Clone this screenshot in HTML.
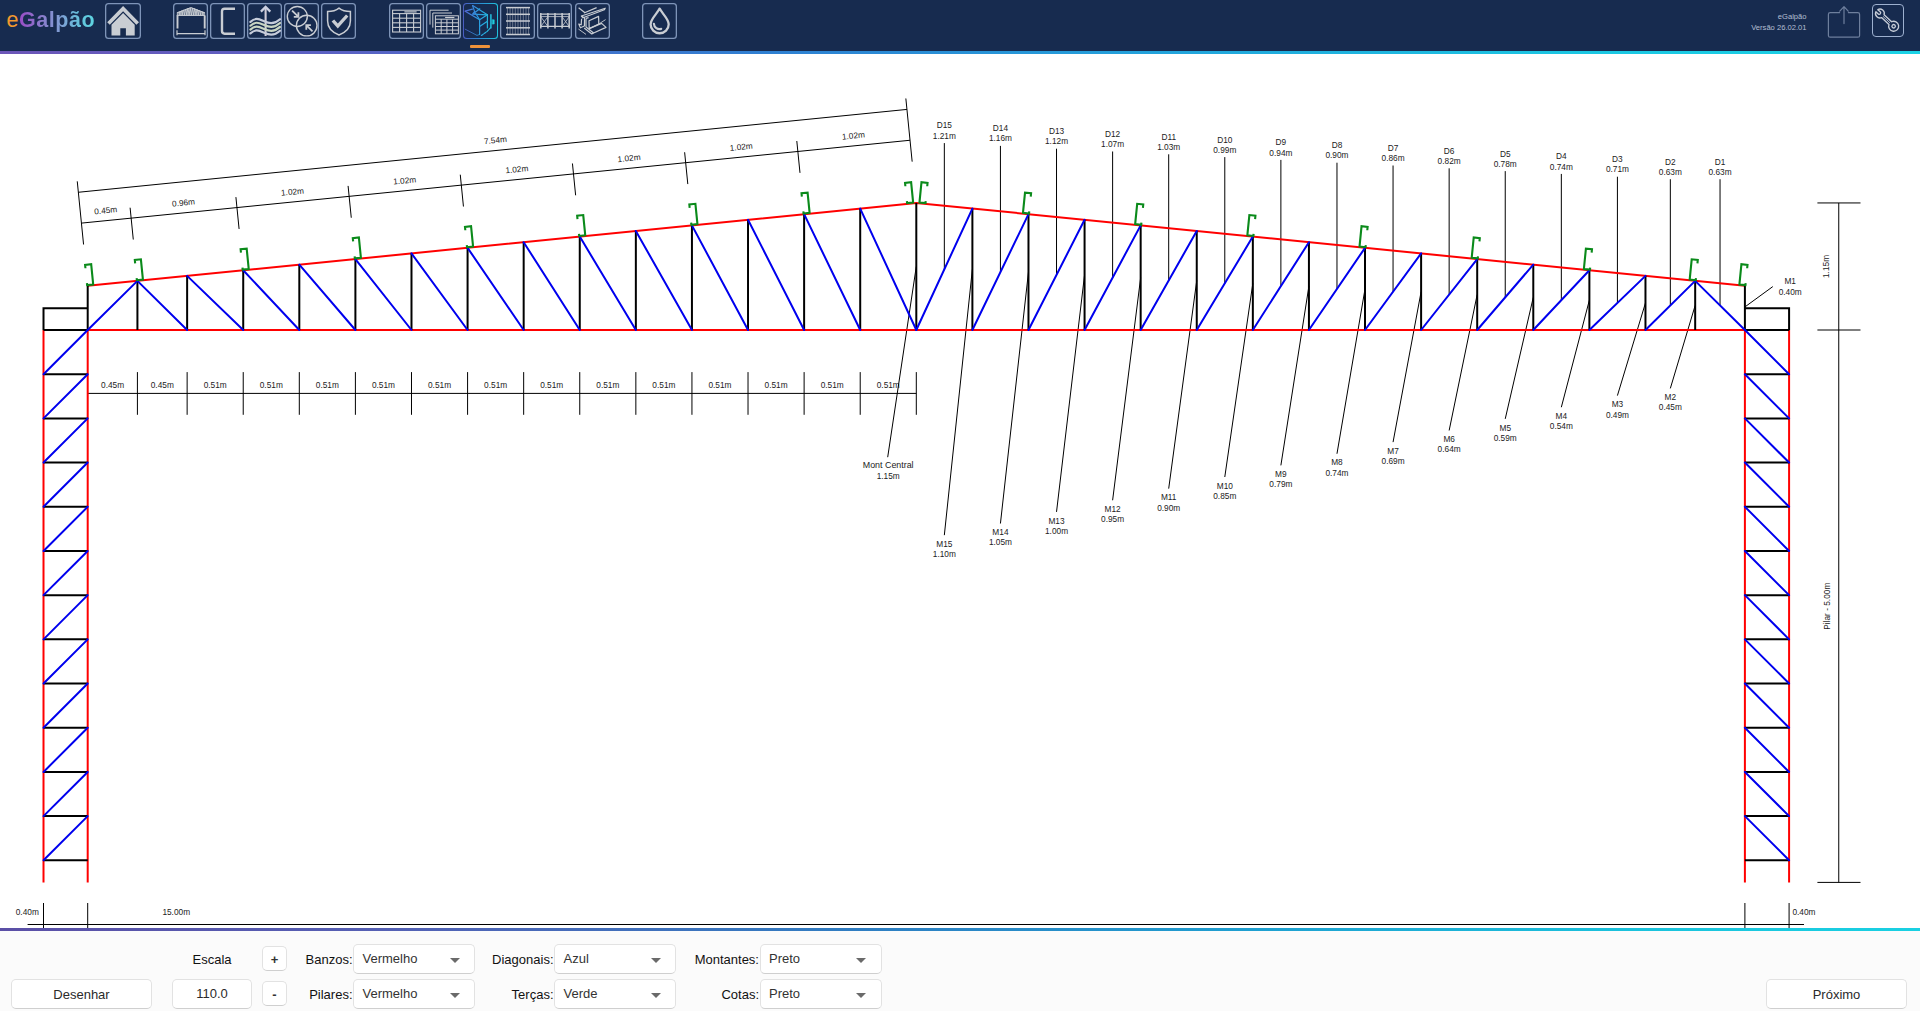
<!DOCTYPE html>
<html lang="pt-BR">
<head>
<meta charset="utf-8">
<title>eGalpão</title>
<style>
html,body{margin:0;padding:0;}
body{width:1920px;height:1011px;overflow:hidden;background:#fff;position:relative;font-family:"Liberation Sans",sans-serif;}
#hdr{position:absolute;left:0;top:0;width:1920px;height:51px;background:#172b4f;z-index:3;}
#hline{position:absolute;left:0;top:50.8px;width:1920px;height:3.6px;z-index:3;background:linear-gradient(90deg,#6c56b8 0%,#5a62c4 18%,#2f80d2 40%,#22a6dc 62%,#1cc6e2 82%,#1bd3e6 100%);}
#logo{position:absolute;left:6.5px;top:8.2px;font-size:21.5px;font-weight:bold;letter-spacing:.55px;line-height:24px;white-space:nowrap;}
#logo .e{color:#f2992e;font-weight:normal;}
#logo .g{background:linear-gradient(90deg,#9a4cc6 0%,#8a7ccc 30%,#7f9fd4 55%,#62c4dc 82%,#5fd6e2 100%);-webkit-background-clip:text;background-clip:text;color:transparent;}
.tb{position:absolute;top:3px;width:35.1px;height:35.9px;box-shadow:inset 0 0 0 1.3px #7e94b8;border-radius:3.5px;}
.tb svg{position:absolute;left:-.4px;top:-.2px;}
.tb.act{box-shadow:none;width:35.2px;height:35.9px;background:linear-gradient(90deg,#4b5cc0,#2b8fd2 50%,#20c0da);}.tb.act:before{content:"";position:absolute;left:1.3px;top:1.3px;right:1.3px;bottom:1.3px;border-radius:3px;background:#172b4f;}
#ind{position:absolute;left:470.3px;top:45px;width:20px;height:2.6px;background:#ef923a;border-radius:1px;}
.ver{position:absolute;right:113.5px;text-align:right;font-size:7.6px;line-height:10px;height:10px;color:#b3bfd2;white-space:nowrap;}
#share{position:absolute;left:1826px;top:4px;}
#tools{position:absolute;left:1872.2px;top:4.4px;width:29.4px;height:30.4px;border:1.4px solid #9db0cf;border-radius:4px;}
#tools svg{position:absolute;left:-1.4px;top:-1.4px;}
#draw{position:absolute;left:0;top:0;z-index:1;}
#draw text{font-family:"Liberation Sans",sans-serif;fill:#222;}
#fline{position:absolute;left:0;top:927.6px;width:1920px;height:3.6px;z-index:3;background:linear-gradient(90deg,#5b4fa6 0%,#5560b4 20%,#2f7ec2 45%,#1f9fd0 65%,#1bc2dc 85%,#19d0e2 100%);}
#ftr{position:absolute;left:0;top:931px;width:1920px;height:80px;background:#fbfbfb;z-index:3;font-size:13px;color:#1a1a1a;}
.fb{position:absolute;box-sizing:border-box;background:#fff;border:1px solid #e2e2e2;border-bottom-color:#cfcfcf;border-radius:5px;text-align:center;color:#2a2a2a;}
.lbl{position:absolute;text-align:right;white-space:nowrap;line-height:16px;color:#111;margin-top:.4px;}
.sel{position:absolute;box-sizing:border-box;width:122px;height:30px;background:#fff;border:1px solid #e2e2e2;border-bottom-color:#cfcfcf;border-radius:5px;line-height:28.6px;padding-left:8.5px;color:#333;}
.sel:after{content:"";position:absolute;right:14.5px;top:12.5px;border-left:5px solid transparent;border-right:5px solid transparent;border-top:5.4px solid #6a6a6a;}
</style>
</head>
<body>
<div id="hdr">
<div id="logo"><span class="e">e</span><span class="g">Galpão</span></div>
<div class="tb " style="left:105.2px;width:36.1px"><svg viewBox="0 0 36 36" width="36" height="36"><path d="M18.1 3 L34 19.2 L31.4 21.8 L18.1 8.2 L4.8 21.8 L2.2 19.2 Z" fill="#c9cdd3"/><path d="M18.1 10 L29.7 21.8 V32.6 H20.9 V25.2 H15.3 V32.6 H6.5 V21.8 Z" fill="#c9cdd3"/></svg></div>
<div class="tb " style="left:173.1px"><svg viewBox="0 0 36 36" width="36" height="36"><defs><clipPath id="rf"><path d="M3.7 12.6 V9.5 L17.9 4.1 L32.1 9.5 V12.6 Z"/></clipPath></defs><path d="M3.7 12.6 V9.5 L17.9 4.1 L32.1 9.5 V12.6 Z" fill="#c9cdd3" fill-opacity=".42"/><g fill="none" stroke="#c9cdd3"><g clip-path="url(#rf)" stroke-width=".9"><path d="M4.6 12.2 L5.8 5 L6.9 12.2" /><path d="M6.9 12.2 L8.0 5 L9.2 12.2" /><path d="M9.2 12.2 L10.3 5 L11.5 12.2" /><path d="M11.5 12.2 L12.7 5 L13.8 12.2" /><path d="M13.8 12.2 L14.9 5 L16.1 12.2" /><path d="M16.1 12.2 L17.2 5 L18.4 12.2" /><path d="M18.4 12.2 L19.5 5 L20.7 12.2" /><path d="M20.7 12.2 L21.8 5 L23.0 12.2" /><path d="M23.0 12.2 L24.1 5 L25.3 12.2" /><path d="M25.3 12.2 L26.4 5 L27.6 12.2" /><path d="M27.6 12.2 L28.8 5 L29.9 12.2" /><path d="M29.9 12.2 L31.0 5 L32.2 12.2" /></g><path d="M3.9 9.9 L17.9 4.6 L31.9 9.9" stroke-width="1"/><path d="M3.7 12.4 H32.1" stroke-width="1.1"/><path d="M4.5 12.4 V25.5 M31.7 12.4 V25.5" stroke-width="1.9"/><path d="M4 27.2 V32.2 M32 27.2 V32.2 M4 30.7 H32" stroke-width="1.2"/></g></svg></div>
<div class="tb " style="left:210.1px"><svg viewBox="0 0 36 36" width="36" height="36"><path d="M25 5.7 H14.6 Q12 5.7 12 8.3 V28.1 Q12 30.7 14.6 30.7 H25" fill="none" stroke="#c9cdd3" stroke-width="2.4"/></svg></div>
<div class="tb " style="left:247.2px"><svg viewBox="0 0 36 36" width="36" height="36"><g fill="none" stroke="#c9cdd3"><path d="M18.6 33 V4.6" stroke-width="2.1" stroke="#d0ccd8"/><path d="M13.9 8.6 L18.6 3.9 L23.3 8.6" stroke-width="2.2" stroke-linejoin="miter" stroke="#ccd0e0"/><g stroke-width="2.2" stroke-linecap="round"><path stroke="#c6ccda" d="M3.4 18.90 C5.4 17.10 7.4 15.95 9.65 15.95 C14.4 15.95 18.9 20.10 24.2 20.10 C27.9 20.10 30.9 18.10 33 16.20" /><path stroke="#c8d4c2" d="M3.4 22.70 C5.4 20.90 7.4 19.75 9.65 19.75 C14.4 19.75 18.9 23.90 24.2 23.90 C27.9 23.90 30.9 21.90 33 20.00" /><path stroke="#c8d4c2" d="M3.4 26.60 C5.4 24.80 7.4 23.65 9.65 23.65 C14.4 23.65 18.9 27.80 24.2 27.80 C27.9 27.80 30.9 25.80 33 23.90" /><path stroke="#c6ccda" d="M3.4 30.40 C5.4 28.60 7.4 27.45 9.65 27.45 C14.4 27.45 18.9 31.60 24.2 31.60 C27.9 31.60 30.9 29.60 33 27.70" /></g></g></svg></div>
<div class="tb " style="left:284.3px"><svg viewBox="0 0 36 36" width="36" height="36"><g fill="none" stroke="#c9cdd3" stroke-width="1.4"><circle cx="13.3" cy="13.45" r="10"/><circle cx="22.7" cy="22.6" r="10.3"/><path d="M8.1 7.6 L14.2 13.7 M14.4 9.3 V13.9 H9.8" stroke-width="1.8"/><path d="M28.5 28.45 L22.5 22.4 M22.3 26.8 V22.2 H26.9" stroke-width="1.8"/></g></svg></div>
<div class="tb " style="left:321.3px"><svg viewBox="0 0 36 36" width="36" height="36"><path d="M18 5.2 C21 7.6 25 8.6 29.4 8.6 V18 C29.4 25 24.6 29.4 18 32 C11.4 29.4 6.6 25 6.6 18 V8.6 C11 8.6 15 7.6 18 5.2 Z" fill="none" stroke="#c9cdd3" stroke-width="1.5"/><path d="M10.6 18.6 L13.2 16.4 L16.8 20.6 L25 11.4 L27.4 13.4 L16.8 25.4 Z" fill="#c9cdd3"/></svg></div>
<div class="tb " style="left:389.2px"><svg viewBox="0 0 36 36" width="36" height="36"><g fill="none" stroke="#c9cdd3" stroke-width="1.1"><rect x="3.6" y="7.2" width="28" height="21.8" /><path d="M3.6 10.6 H31.6" /><path d="M3.6 15.2 H31.6" /><path d="M3.6 19.8 H31.6" /><path d="M3.6 24.4 H31.6" /><path d="M10.6 10.6 V29.0" /><path d="M17.6 10.6 V29.0" /><path d="M24.6 10.6 V29.0" /><path d="M15.4 8.9 H27.6" stroke-width="1.2"/></g></svg></div>
<div class="tb " style="left:426.2px"><svg viewBox="0 0 36 36" width="36" height="36"><g fill="none" stroke="#c9cdd3" stroke-width="1"><path d="M4 21.6 V7.2 H22.6"/><path d="M6.8 24.6 V10 H26"/><rect x="9.4" y="12.8" width="23" height="18" /><path d="M9.4 16.2 H32.4" /><path d="M9.4 19.8 H32.4" /><path d="M9.4 23.5 H32.4" /><path d="M9.4 27.1 H32.4" /><path d="M15.2 16.2 V30.8" /><path d="M20.9 16.2 V30.8" /><path d="M26.6 16.2 V30.8" /><path d="M19.1 14.5 H28.4" stroke-width="1.2"/></g></svg></div>
<div class="tb act" style="left:463.2px"><svg viewBox="0 0 36 36" width="36" height="36"><defs><linearGradient id="gbx" gradientUnits="userSpaceOnUse" x1="0" y1="0" x2="34" y2="0"><stop offset="0" stop-color="#5a62d8"/><stop offset="0.45" stop-color="#2a9be0"/><stop offset="1" stop-color="#1fd0dc"/></linearGradient></defs><g fill="none" stroke="url(#gbx)" stroke-width="1.2" stroke-linejoin="round" stroke-linecap="round"><path d="M2.2 8.2 L16.6 16.8 V31.4"/><path d="M2.2 8.2 L9.4 6.2 M9.6 2.6 L24.4 11.8 L16.6 16.8"/><path d="M9.6 2.6 L11.6 8.6 L16.6 16.8 M9.6 11.2 L16.8 5.8 M9.6 11.2 L24.4 11.8 M11.6 8.6 L9.6 11.2"/><path d="M24.4 11.8 V25 M17 23.2 L24.4 18.2"/><path d="M2.2 26.2 L14 32.4 L16.6 31.4" stroke-width="1" opacity=".75"/><path d="M18.4 32.4 L24.4 28.2 L27.6 24.6" stroke-dasharray="2.2 1.2"/><path d="M27.9 11.8 V25" stroke-width="1.5"/><path d="M29.4 16.8 H31.2 V21 H29.4 Z" fill="#1fd0dc" stroke-width=".6"/></g></svg></div>
<div class="tb " style="left:500.3px"><svg viewBox="0 0 36 36" width="36" height="36"><g fill="none" stroke="#c9cdd3"><path d="M6 4.6 H30" stroke-width="1.5"/><path d="M6 11.3 H30" stroke-width="1.5"/><path d="M6 18 H30" stroke-width="1.5"/><path d="M6 24.8 H30" stroke-width="1.5"/><path d="M6 31.5 H30" stroke-width="1.5"/><path d="M7.4 4.6 V31.5" stroke-width="0.6" opacity=".8"/><path d="M10.1 4.6 V31.5" stroke-width="0.6" opacity=".8"/><path d="M12.7 4.6 V31.5" stroke-width="0.6" opacity=".8"/><path d="M15.3 4.6 V31.5" stroke-width="0.6" opacity=".8"/><path d="M18.0 4.6 V31.5" stroke-width="0.6" opacity=".8"/><path d="M20.6 4.6 V31.5" stroke-width="0.6" opacity=".8"/><path d="M23.3 4.6 V31.5" stroke-width="0.6" opacity=".8"/><path d="M26.0 4.6 V31.5" stroke-width="0.6" opacity=".8"/><path d="M28.6 4.6 V31.5" stroke-width="0.6" opacity=".8"/></g></svg></div>
<div class="tb " style="left:537.4px"><svg viewBox="0 0 36 36" width="36" height="36"><g fill="none" stroke="#c9cdd3"><path d="M3.4 11.2 H32.8 M3.4 23.4 H32.8" stroke-width="1.3"/><path d="M3.8 10 V25.4" stroke-width="1.5"/><path d="M10.9 10 V25.4" stroke-width="1.5"/><path d="M18 10 V25.4" stroke-width="1.5"/><path d="M25.1 10 V25.4" stroke-width="1.5"/><path d="M32.2 10 V25.4" stroke-width="1.5"/><path d="M3.8 13.8 L10.9 23.4 M10.9 13.8 L3.8 23.4 M25.1 13.8 L32.2 23.4 M32.2 13.8 L25.1 23.4" stroke-width=".8"/><path d="M3.4 13.6 H32.8" stroke-width=".8"/></g></svg></div>
<div class="tb " style="left:574.5px"><svg viewBox="0 0 36 36" width="36" height="36"><g transform="translate(0 -2.6)" fill="none" stroke="#c9cdd3" stroke-width="1.2" stroke-linejoin="round"><path d="M4.6 7.4 L11 12.4 M10 12.6 L22.6 7.2 M7.4 15.6 L31.2 7.8 L30.4 9.4 L9 17.4 Z"/><path d="M7.4 15.6 L10.6 17.6 L10.4 25.6 L6.4 27.4 L4.8 23.6 L7.2 24.4 L7.6 18.4"/><path d="M12 18 V26.6 L19.6 32.6 M12 18 L14.6 17.2"/><path d="M15 20.4 L24.6 16 L24.8 23.6 L15.2 28.2 Z"/><path d="M15.2 28.2 L27.6 23 L32 27 L19.6 32.6 L17.8 33.6 L10.2 27.6"/><path d="M24.8 23.6 L31.6 19.2 M4.4 28.6 L12 34" stroke-width=".9"/></g></svg></div>
<div class="tb " style="left:641.9px"><svg viewBox="0 0 36 36" width="36" height="36"><g fill="none" stroke="#c9cdd3"><path d="M17.65 5.6 C15 10.8 8.6 16 8.6 21.2 A9.05 9.05 0 0 0 26.7 21.2 C26.7 16 20.3 10.8 17.65 5.6 Z" stroke-width="2.3" stroke-linejoin="round"/><path d="M11.9 20.8 A5.6 5.6 0 0 0 19.2 25.9" stroke-width="2.2" stroke-linecap="round"/></g></svg></div>
<div id="ind"></div>
<div class="ver" style="top:11.6px">eGalpão</div><div class="ver" style="top:22.5px">Versão 26.02.01</div>
<div id="share"><svg width="36" height="36" viewBox="0 0 36 36"><g fill="none" stroke="#6e7f9d" stroke-width="1.2" stroke-linecap="round" stroke-linejoin="round"><path d="M13.6 8.6 H4.2 Q2.4 8.6 2.4 10.4 V31.4 Q2.4 33.2 4.2 33.2 H31.8 Q33.6 33.2 33.6 31.4 V10.4 Q33.6 8.6 31.8 8.6 H22.4"/><path d="M18 19.6 V3 M13.8 7.2 L18 2.6 L22.2 7.2"/></g></svg></div>
<div id="tools"><svg width="34" height="34" viewBox="0 0 34 34"><g transform="translate(7.9 9.5) rotate(42.8)" fill="none" stroke="#c6ccd7" stroke-width="1.35" stroke-linejoin="round" stroke-linecap="round"><path d="M-4.17 -1.4 L-0.9 -1.4 A1.4 1.4 0 0 1 -0.9 1.4 L-4.17 1.4 A4.4 4.4 0 0 0 3.97 1.9 L14.13 1.9 A5 5 0 1 0 14.13 -1.9 L3.97 -1.9 A4.4 4.4 0 0 0 -4.17 -1.4 Z"/><circle cx="18.75" cy="0" r="1.7"/><path d="M4.6 0 H13.35" stroke-width=".8"/></g></svg></div>
</div>
<div id="hline"></div>
<svg id="draw" width="1920" height="1011" viewBox="0 0 1920 1011">
<line x1="87.7" y1="393.4" x2="916.3" y2="393.4" stroke="#000" stroke-width="1.0"/>
<line x1="137.42" y1="372.1" x2="137.42" y2="414.8" stroke="#000" stroke-width="1.0"/>
<text x="112.56" y="387.9" font-size="8.3" text-anchor="middle">0.45m</text>
<line x1="187.13" y1="372.1" x2="187.13" y2="414.8" stroke="#000" stroke-width="1.0"/>
<text x="162.27" y="387.9" font-size="8.3" text-anchor="middle">0.45m</text>
<line x1="243.22" y1="372.1" x2="243.22" y2="414.8" stroke="#000" stroke-width="1.0"/>
<text x="215.18" y="387.9" font-size="8.3" text-anchor="middle">0.51m</text>
<line x1="299.31" y1="372.1" x2="299.31" y2="414.8" stroke="#000" stroke-width="1.0"/>
<text x="271.27" y="387.9" font-size="8.3" text-anchor="middle">0.51m</text>
<line x1="355.4" y1="372.1" x2="355.4" y2="414.8" stroke="#000" stroke-width="1.0"/>
<text x="327.36" y="387.9" font-size="8.3" text-anchor="middle">0.51m</text>
<line x1="411.49" y1="372.1" x2="411.49" y2="414.8" stroke="#000" stroke-width="1.0"/>
<text x="383.45" y="387.9" font-size="8.3" text-anchor="middle">0.51m</text>
<line x1="467.58" y1="372.1" x2="467.58" y2="414.8" stroke="#000" stroke-width="1.0"/>
<text x="439.54" y="387.9" font-size="8.3" text-anchor="middle">0.51m</text>
<line x1="523.67" y1="372.1" x2="523.67" y2="414.8" stroke="#000" stroke-width="1.0"/>
<text x="495.63" y="387.9" font-size="8.3" text-anchor="middle">0.51m</text>
<line x1="579.76" y1="372.1" x2="579.76" y2="414.8" stroke="#000" stroke-width="1.0"/>
<text x="551.72" y="387.9" font-size="8.3" text-anchor="middle">0.51m</text>
<line x1="635.85" y1="372.1" x2="635.85" y2="414.8" stroke="#000" stroke-width="1.0"/>
<text x="607.81" y="387.9" font-size="8.3" text-anchor="middle">0.51m</text>
<line x1="691.94" y1="372.1" x2="691.94" y2="414.8" stroke="#000" stroke-width="1.0"/>
<text x="663.9" y="387.9" font-size="8.3" text-anchor="middle">0.51m</text>
<line x1="748.03" y1="372.1" x2="748.03" y2="414.8" stroke="#000" stroke-width="1.0"/>
<text x="719.99" y="387.9" font-size="8.3" text-anchor="middle">0.51m</text>
<line x1="804.12" y1="372.1" x2="804.12" y2="414.8" stroke="#000" stroke-width="1.0"/>
<text x="776.08" y="387.9" font-size="8.3" text-anchor="middle">0.51m</text>
<line x1="860.21" y1="372.1" x2="860.21" y2="414.8" stroke="#000" stroke-width="1.0"/>
<text x="832.17" y="387.9" font-size="8.3" text-anchor="middle">0.51m</text>
<line x1="916.3" y1="372.1" x2="916.3" y2="414.8" stroke="#000" stroke-width="1.0"/>
<text x="888.26" y="387.9" font-size="8.3" text-anchor="middle">0.51m</text>
<line x1="81.43" y1="223.12" x2="910.03" y2="140.26" stroke="#000" stroke-width="1.0"/>
<line x1="78.35" y1="192.27" x2="906.95" y2="109.41" stroke="#000" stroke-width="1.0"/>
<line x1="83.57" y1="244.51" x2="77.25" y2="181.33" stroke="#000" stroke-width="1.0"/>
<line x1="133.29" y1="239.54" x2="130.1" y2="207.7" stroke="#000" stroke-width="1.0"/>
<text x="106" y="213.33" font-size="8.3" text-anchor="middle" transform="rotate(-5.71 106 213.33)">0.45m</text>
<line x1="239.09" y1="228.96" x2="235.91" y2="197.12" stroke="#000" stroke-width="1.0"/>
<text x="183.77" y="205.55" font-size="8.3" text-anchor="middle" transform="rotate(-5.71 183.77 205.55)">0.96m</text>
<line x1="351.27" y1="217.74" x2="348.09" y2="185.9" stroke="#000" stroke-width="1.0"/>
<text x="292.76" y="194.65" font-size="8.3" text-anchor="middle" transform="rotate(-5.71 292.76 194.65)">1.02m</text>
<line x1="463.45" y1="206.53" x2="460.27" y2="174.68" stroke="#000" stroke-width="1.0"/>
<text x="404.94" y="183.43" font-size="8.3" text-anchor="middle" transform="rotate(-5.71 404.94 183.43)">1.02m</text>
<line x1="575.63" y1="195.31" x2="572.45" y2="163.47" stroke="#000" stroke-width="1.0"/>
<text x="517.12" y="172.22" font-size="8.3" text-anchor="middle" transform="rotate(-5.71 517.12 172.22)">1.02m</text>
<line x1="687.81" y1="184.09" x2="684.63" y2="152.25" stroke="#000" stroke-width="1.0"/>
<text x="629.3" y="161" font-size="8.3" text-anchor="middle" transform="rotate(-5.71 629.3 161)">1.02m</text>
<line x1="799.99" y1="172.87" x2="796.81" y2="141.03" stroke="#000" stroke-width="1.0"/>
<text x="741.48" y="149.78" font-size="8.3" text-anchor="middle" transform="rotate(-5.71 741.48 149.78)">1.02m</text>
<line x1="912.17" y1="161.65" x2="905.85" y2="98.47" stroke="#000" stroke-width="1.0"/>
<text x="853.66" y="138.56" font-size="8.3" text-anchor="middle" transform="rotate(-5.71 853.66 138.56)">1.02m</text>
<text x="495.66" y="143.01" font-size="8.3" text-anchor="middle" transform="rotate(-5.71 495.66 143.01)">7.54m</text>
<line x1="1838.75" y1="202.95" x2="1838.75" y2="882.4" stroke="#000" stroke-width="1.0"/>
<line x1="1817.4" y1="202.95" x2="1860.5" y2="202.95" stroke="#000" stroke-width="1.0"/>
<line x1="1817.4" y1="330" x2="1860.5" y2="330" stroke="#000" stroke-width="1.0"/>
<line x1="1817.4" y1="882.4" x2="1860.5" y2="882.4" stroke="#000" stroke-width="1.0"/>
<text x="1829.3" y="266.47" font-size="8.3" text-anchor="middle" transform="rotate(-90 1829.3 266.47)">1.15m</text>
<text x="1829.7" y="606.2" font-size="8.3" text-anchor="middle" transform="rotate(-90 1829.7 606.2)">Pilar - 5.00m</text>
<line x1="27.6" y1="924.5" x2="1804" y2="924.5" stroke="#000" stroke-width="1.0"/>
<line x1="43.51" y1="903" x2="43.51" y2="929" stroke="#000" stroke-width="1.0"/>
<line x1="87.7" y1="903" x2="87.7" y2="929" stroke="#000" stroke-width="1.0"/>
<line x1="1744.9" y1="903" x2="1744.9" y2="929" stroke="#000" stroke-width="1.0"/>
<line x1="1789.09" y1="903" x2="1789.09" y2="929" stroke="#000" stroke-width="1.0"/>
<text x="38.8" y="914.7" font-size="8.3" text-anchor="end">0.40m</text>
<text x="162.4" y="914.7" font-size="8.3" text-anchor="start">15.00m</text>
<text x="1792.4" y="914.7" font-size="8.3" text-anchor="start">0.40m</text>
<line x1="1720.04" y1="179.22" x2="1720.04" y2="305.42" stroke="#000" stroke-width="1.0"/>
<text x="1720.04" y="164.62" font-size="8.3" text-anchor="middle">D1</text>
<text x="1720.04" y="174.82" font-size="8.3" text-anchor="middle">0.63m</text>
<line x1="1670.33" y1="179.22" x2="1670.33" y2="305.42" stroke="#000" stroke-width="1.0"/>
<text x="1670.33" y="164.62" font-size="8.3" text-anchor="middle">D2</text>
<text x="1670.33" y="174.82" font-size="8.3" text-anchor="middle">0.63m</text>
<line x1="1617.42" y1="176.73" x2="1617.42" y2="302.93" stroke="#000" stroke-width="1.0"/>
<text x="1617.42" y="162.13" font-size="8.3" text-anchor="middle">D3</text>
<text x="1617.42" y="172.33" font-size="8.3" text-anchor="middle">0.71m</text>
<line x1="1561.33" y1="173.93" x2="1561.33" y2="300.13" stroke="#000" stroke-width="1.0"/>
<text x="1561.33" y="159.33" font-size="8.3" text-anchor="middle">D4</text>
<text x="1561.33" y="169.53" font-size="8.3" text-anchor="middle">0.74m</text>
<line x1="1505.24" y1="171.12" x2="1505.24" y2="297.32" stroke="#000" stroke-width="1.0"/>
<text x="1505.24" y="156.52" font-size="8.3" text-anchor="middle">D5</text>
<text x="1505.24" y="166.72" font-size="8.3" text-anchor="middle">0.78m</text>
<line x1="1449.15" y1="168.32" x2="1449.15" y2="294.52" stroke="#000" stroke-width="1.0"/>
<text x="1449.15" y="153.72" font-size="8.3" text-anchor="middle">D6</text>
<text x="1449.15" y="163.92" font-size="8.3" text-anchor="middle">0.82m</text>
<line x1="1393.06" y1="165.51" x2="1393.06" y2="291.71" stroke="#000" stroke-width="1.0"/>
<text x="1393.06" y="150.91" font-size="8.3" text-anchor="middle">D7</text>
<text x="1393.06" y="161.11" font-size="8.3" text-anchor="middle">0.86m</text>
<line x1="1336.97" y1="162.71" x2="1336.97" y2="288.91" stroke="#000" stroke-width="1.0"/>
<text x="1336.97" y="148.11" font-size="8.3" text-anchor="middle">D8</text>
<text x="1336.97" y="158.31" font-size="8.3" text-anchor="middle">0.90m</text>
<line x1="1280.88" y1="159.91" x2="1280.88" y2="286.11" stroke="#000" stroke-width="1.0"/>
<text x="1280.88" y="145.31" font-size="8.3" text-anchor="middle">D9</text>
<text x="1280.88" y="155.51" font-size="8.3" text-anchor="middle">0.94m</text>
<line x1="1224.79" y1="157.1" x2="1224.79" y2="283.3" stroke="#000" stroke-width="1.0"/>
<text x="1224.79" y="142.5" font-size="8.3" text-anchor="middle">D10</text>
<text x="1224.79" y="152.7" font-size="8.3" text-anchor="middle">0.99m</text>
<line x1="1168.7" y1="154.3" x2="1168.7" y2="280.5" stroke="#000" stroke-width="1.0"/>
<text x="1168.7" y="139.7" font-size="8.3" text-anchor="middle">D11</text>
<text x="1168.7" y="149.9" font-size="8.3" text-anchor="middle">1.03m</text>
<line x1="1112.61" y1="151.49" x2="1112.61" y2="277.69" stroke="#000" stroke-width="1.0"/>
<text x="1112.61" y="136.89" font-size="8.3" text-anchor="middle">D12</text>
<text x="1112.61" y="147.09" font-size="8.3" text-anchor="middle">1.07m</text>
<line x1="1056.52" y1="148.69" x2="1056.52" y2="274.89" stroke="#000" stroke-width="1.0"/>
<text x="1056.52" y="134.09" font-size="8.3" text-anchor="middle">D13</text>
<text x="1056.52" y="144.29" font-size="8.3" text-anchor="middle">1.12m</text>
<line x1="1000.43" y1="145.88" x2="1000.43" y2="272.08" stroke="#000" stroke-width="1.0"/>
<text x="1000.43" y="131.28" font-size="8.3" text-anchor="middle">D14</text>
<text x="1000.43" y="141.48" font-size="8.3" text-anchor="middle">1.16m</text>
<line x1="944.34" y1="143.08" x2="944.34" y2="269.28" stroke="#000" stroke-width="1.0"/>
<text x="944.34" y="128.48" font-size="8.3" text-anchor="middle">D15</text>
<text x="944.34" y="138.68" font-size="8.3" text-anchor="middle">1.21m</text>
<line x1="1745.1" y1="306.8" x2="1772.8" y2="286.6" stroke="#000" stroke-width="1.0"/>
<text x="1790.2" y="284.3" font-size="8.3" text-anchor="middle">M1</text>
<text x="1790.2" y="294.5" font-size="8.3" text-anchor="middle">0.40m</text>
<line x1="1695.18" y1="305.42" x2="1670.33" y2="388.4" stroke="#000" stroke-width="1.0"/>
<text x="1670.33" y="400.1" font-size="8.3" text-anchor="middle">M2</text>
<text x="1670.33" y="410.3" font-size="8.3" text-anchor="middle">0.45m</text>
<line x1="1645.47" y1="302.93" x2="1617.42" y2="395.6" stroke="#000" stroke-width="1.0"/>
<text x="1617.42" y="407.3" font-size="8.3" text-anchor="middle">M3</text>
<text x="1617.42" y="417.5" font-size="8.3" text-anchor="middle">0.49m</text>
<line x1="1589.38" y1="300.13" x2="1561.33" y2="407.23" stroke="#000" stroke-width="1.0"/>
<text x="1561.33" y="418.93" font-size="8.3" text-anchor="middle">M4</text>
<text x="1561.33" y="429.13" font-size="8.3" text-anchor="middle">0.54m</text>
<line x1="1533.29" y1="297.32" x2="1505.24" y2="418.86" stroke="#000" stroke-width="1.0"/>
<text x="1505.24" y="430.56" font-size="8.3" text-anchor="middle">M5</text>
<text x="1505.24" y="440.76" font-size="8.3" text-anchor="middle">0.59m</text>
<line x1="1477.2" y1="294.52" x2="1449.15" y2="430.49" stroke="#000" stroke-width="1.0"/>
<text x="1449.15" y="442.19" font-size="8.3" text-anchor="middle">M6</text>
<text x="1449.15" y="452.39" font-size="8.3" text-anchor="middle">0.64m</text>
<line x1="1421.11" y1="291.71" x2="1393.06" y2="442.12" stroke="#000" stroke-width="1.0"/>
<text x="1393.06" y="453.82" font-size="8.3" text-anchor="middle">M7</text>
<text x="1393.06" y="464.02" font-size="8.3" text-anchor="middle">0.69m</text>
<line x1="1365.02" y1="288.91" x2="1336.97" y2="453.75" stroke="#000" stroke-width="1.0"/>
<text x="1336.97" y="465.45" font-size="8.3" text-anchor="middle">M8</text>
<text x="1336.97" y="475.65" font-size="8.3" text-anchor="middle">0.74m</text>
<line x1="1308.93" y1="286.11" x2="1280.88" y2="465.38" stroke="#000" stroke-width="1.0"/>
<text x="1280.88" y="477.08" font-size="8.3" text-anchor="middle">M9</text>
<text x="1280.88" y="487.28" font-size="8.3" text-anchor="middle">0.79m</text>
<line x1="1252.84" y1="283.3" x2="1224.79" y2="477.01" stroke="#000" stroke-width="1.0"/>
<text x="1224.79" y="488.71" font-size="8.3" text-anchor="middle">M10</text>
<text x="1224.79" y="498.91" font-size="8.3" text-anchor="middle">0.85m</text>
<line x1="1196.75" y1="280.5" x2="1168.7" y2="488.64" stroke="#000" stroke-width="1.0"/>
<text x="1168.7" y="500.34" font-size="8.3" text-anchor="middle">M11</text>
<text x="1168.7" y="510.54" font-size="8.3" text-anchor="middle">0.90m</text>
<line x1="1140.66" y1="277.69" x2="1112.61" y2="500.27" stroke="#000" stroke-width="1.0"/>
<text x="1112.61" y="511.97" font-size="8.3" text-anchor="middle">M12</text>
<text x="1112.61" y="522.17" font-size="8.3" text-anchor="middle">0.95m</text>
<line x1="1084.57" y1="274.89" x2="1056.52" y2="511.9" stroke="#000" stroke-width="1.0"/>
<text x="1056.52" y="523.6" font-size="8.3" text-anchor="middle">M13</text>
<text x="1056.52" y="533.8" font-size="8.3" text-anchor="middle">1.00m</text>
<line x1="1028.48" y1="272.08" x2="1000.43" y2="523.53" stroke="#000" stroke-width="1.0"/>
<text x="1000.43" y="535.23" font-size="8.3" text-anchor="middle">M14</text>
<text x="1000.43" y="545.43" font-size="8.3" text-anchor="middle">1.05m</text>
<line x1="972.39" y1="269.28" x2="944.34" y2="535.16" stroke="#000" stroke-width="1.0"/>
<text x="944.34" y="546.86" font-size="8.3" text-anchor="middle">M15</text>
<text x="944.34" y="557.06" font-size="8.3" text-anchor="middle">1.10m</text>
<line x1="916.3" y1="266.47" x2="887.7" y2="457.2" stroke="#000" stroke-width="1.0"/>
<text x="888.2" y="468.4" font-size="8.9" text-anchor="middle">Mont Central</text>
<text x="888.2" y="478.7" font-size="8.3" text-anchor="middle">1.15m</text>
<line x1="43.51" y1="330" x2="43.51" y2="882.4" stroke="#ff0000" stroke-width="2.0"/>
<line x1="87.7" y1="330" x2="87.7" y2="882.4" stroke="#ff0000" stroke-width="2.0"/>
<line x1="1744.9" y1="330" x2="1744.9" y2="882.4" stroke="#ff0000" stroke-width="2.0"/>
<line x1="1789.09" y1="330" x2="1789.09" y2="882.4" stroke="#ff0000" stroke-width="2.0"/>
<line x1="87.7" y1="330" x2="1744.9" y2="330" stroke="#ff0000" stroke-width="2.0"/>
<polyline points="87.7,285.81 916.3,202.95 1744.9,285.81" fill="none" stroke="#ff0000" stroke-width="2.0" stroke-linejoin="round"/>
<line x1="87.7" y1="330" x2="87.7" y2="285.81" stroke="#000" stroke-width="2.0"/>
<line x1="137.42" y1="330" x2="137.42" y2="280.84" stroke="#000" stroke-width="2.0"/>
<line x1="187.13" y1="330" x2="187.13" y2="275.86" stroke="#000" stroke-width="2.0"/>
<line x1="243.22" y1="330" x2="243.22" y2="270.26" stroke="#000" stroke-width="2.0"/>
<line x1="299.31" y1="330" x2="299.31" y2="264.65" stroke="#000" stroke-width="2.0"/>
<line x1="355.4" y1="330" x2="355.4" y2="259.04" stroke="#000" stroke-width="2.0"/>
<line x1="411.49" y1="330" x2="411.49" y2="253.43" stroke="#000" stroke-width="2.0"/>
<line x1="467.58" y1="330" x2="467.58" y2="247.82" stroke="#000" stroke-width="2.0"/>
<line x1="523.67" y1="330" x2="523.67" y2="242.21" stroke="#000" stroke-width="2.0"/>
<line x1="579.76" y1="330" x2="579.76" y2="236.6" stroke="#000" stroke-width="2.0"/>
<line x1="635.85" y1="330" x2="635.85" y2="230.99" stroke="#000" stroke-width="2.0"/>
<line x1="691.94" y1="330" x2="691.94" y2="225.38" stroke="#000" stroke-width="2.0"/>
<line x1="748.03" y1="330" x2="748.03" y2="219.77" stroke="#000" stroke-width="2.0"/>
<line x1="804.12" y1="330" x2="804.12" y2="214.17" stroke="#000" stroke-width="2.0"/>
<line x1="860.21" y1="330" x2="860.21" y2="208.56" stroke="#000" stroke-width="2.0"/>
<line x1="1744.9" y1="330" x2="1744.9" y2="285.81" stroke="#000" stroke-width="2.0"/>
<line x1="1695.18" y1="330" x2="1695.18" y2="280.84" stroke="#000" stroke-width="2.0"/>
<line x1="1645.47" y1="330" x2="1645.47" y2="275.86" stroke="#000" stroke-width="2.0"/>
<line x1="1589.38" y1="330" x2="1589.38" y2="270.26" stroke="#000" stroke-width="2.0"/>
<line x1="1533.29" y1="330" x2="1533.29" y2="264.65" stroke="#000" stroke-width="2.0"/>
<line x1="1477.2" y1="330" x2="1477.2" y2="259.04" stroke="#000" stroke-width="2.0"/>
<line x1="1421.11" y1="330" x2="1421.11" y2="253.43" stroke="#000" stroke-width="2.0"/>
<line x1="1365.02" y1="330" x2="1365.02" y2="247.82" stroke="#000" stroke-width="2.0"/>
<line x1="1308.93" y1="330" x2="1308.93" y2="242.21" stroke="#000" stroke-width="2.0"/>
<line x1="1252.84" y1="330" x2="1252.84" y2="236.6" stroke="#000" stroke-width="2.0"/>
<line x1="1196.75" y1="330" x2="1196.75" y2="230.99" stroke="#000" stroke-width="2.0"/>
<line x1="1140.66" y1="330" x2="1140.66" y2="225.38" stroke="#000" stroke-width="2.0"/>
<line x1="1084.57" y1="330" x2="1084.57" y2="219.77" stroke="#000" stroke-width="2.0"/>
<line x1="1028.48" y1="330" x2="1028.48" y2="214.17" stroke="#000" stroke-width="2.0"/>
<line x1="972.39" y1="330" x2="972.39" y2="208.56" stroke="#000" stroke-width="2.0"/>
<line x1="916.3" y1="330" x2="916.3" y2="202.95" stroke="#000" stroke-width="2.0"/>
<line x1="87.7" y1="330" x2="43.51" y2="330" stroke="#000" stroke-width="2.0"/>
<line x1="87.7" y1="374.19" x2="43.51" y2="374.19" stroke="#000" stroke-width="2.0"/>
<line x1="87.7" y1="418.38" x2="43.51" y2="418.38" stroke="#000" stroke-width="2.0"/>
<line x1="87.7" y1="462.58" x2="43.51" y2="462.58" stroke="#000" stroke-width="2.0"/>
<line x1="87.7" y1="506.77" x2="43.51" y2="506.77" stroke="#000" stroke-width="2.0"/>
<line x1="87.7" y1="550.96" x2="43.51" y2="550.96" stroke="#000" stroke-width="2.0"/>
<line x1="87.7" y1="595.15" x2="43.51" y2="595.15" stroke="#000" stroke-width="2.0"/>
<line x1="87.7" y1="639.34" x2="43.51" y2="639.34" stroke="#000" stroke-width="2.0"/>
<line x1="87.7" y1="683.54" x2="43.51" y2="683.54" stroke="#000" stroke-width="2.0"/>
<line x1="87.7" y1="727.73" x2="43.51" y2="727.73" stroke="#000" stroke-width="2.0"/>
<line x1="87.7" y1="771.92" x2="43.51" y2="771.92" stroke="#000" stroke-width="2.0"/>
<line x1="87.7" y1="816.11" x2="43.51" y2="816.11" stroke="#000" stroke-width="2.0"/>
<line x1="87.7" y1="860.3" x2="43.51" y2="860.3" stroke="#000" stroke-width="2.0"/>
<polyline points="87.7,308.2 43.51,308.2 43.51,330" fill="none" stroke="#000" stroke-width="2.0" stroke-linejoin="miter"/>
<line x1="1744.9" y1="330" x2="1789.09" y2="330" stroke="#000" stroke-width="2.0"/>
<line x1="1744.9" y1="374.19" x2="1789.09" y2="374.19" stroke="#000" stroke-width="2.0"/>
<line x1="1744.9" y1="418.38" x2="1789.09" y2="418.38" stroke="#000" stroke-width="2.0"/>
<line x1="1744.9" y1="462.58" x2="1789.09" y2="462.58" stroke="#000" stroke-width="2.0"/>
<line x1="1744.9" y1="506.77" x2="1789.09" y2="506.77" stroke="#000" stroke-width="2.0"/>
<line x1="1744.9" y1="550.96" x2="1789.09" y2="550.96" stroke="#000" stroke-width="2.0"/>
<line x1="1744.9" y1="595.15" x2="1789.09" y2="595.15" stroke="#000" stroke-width="2.0"/>
<line x1="1744.9" y1="639.34" x2="1789.09" y2="639.34" stroke="#000" stroke-width="2.0"/>
<line x1="1744.9" y1="683.54" x2="1789.09" y2="683.54" stroke="#000" stroke-width="2.0"/>
<line x1="1744.9" y1="727.73" x2="1789.09" y2="727.73" stroke="#000" stroke-width="2.0"/>
<line x1="1744.9" y1="771.92" x2="1789.09" y2="771.92" stroke="#000" stroke-width="2.0"/>
<line x1="1744.9" y1="816.11" x2="1789.09" y2="816.11" stroke="#000" stroke-width="2.0"/>
<line x1="1744.9" y1="860.3" x2="1789.09" y2="860.3" stroke="#000" stroke-width="2.0"/>
<polyline points="1744.9,308.2 1789.09,308.2 1789.09,330" fill="none" stroke="#000" stroke-width="2.0" stroke-linejoin="miter"/>
<line x1="87.7" y1="330" x2="137.42" y2="280.84" stroke="#0000ee" stroke-width="2.0" stroke-linecap="round"/>
<line x1="1744.9" y1="330" x2="1695.18" y2="280.84" stroke="#0000ee" stroke-width="2.0" stroke-linecap="round"/>
<line x1="137.42" y1="280.84" x2="187.13" y2="330" stroke="#0000ee" stroke-width="2.0" stroke-linecap="round"/>
<line x1="1695.18" y1="280.84" x2="1645.47" y2="330" stroke="#0000ee" stroke-width="2.0" stroke-linecap="round"/>
<line x1="187.13" y1="275.86" x2="243.22" y2="330" stroke="#0000ee" stroke-width="2.0" stroke-linecap="round"/>
<line x1="1645.47" y1="275.86" x2="1589.38" y2="330" stroke="#0000ee" stroke-width="2.0" stroke-linecap="round"/>
<line x1="243.22" y1="270.26" x2="299.31" y2="330" stroke="#0000ee" stroke-width="2.0" stroke-linecap="round"/>
<line x1="1589.38" y1="270.26" x2="1533.29" y2="330" stroke="#0000ee" stroke-width="2.0" stroke-linecap="round"/>
<line x1="299.31" y1="264.65" x2="355.4" y2="330" stroke="#0000ee" stroke-width="2.0" stroke-linecap="round"/>
<line x1="1533.29" y1="264.65" x2="1477.2" y2="330" stroke="#0000ee" stroke-width="2.0" stroke-linecap="round"/>
<line x1="355.4" y1="259.04" x2="411.49" y2="330" stroke="#0000ee" stroke-width="2.0" stroke-linecap="round"/>
<line x1="1477.2" y1="259.04" x2="1421.11" y2="330" stroke="#0000ee" stroke-width="2.0" stroke-linecap="round"/>
<line x1="411.49" y1="253.43" x2="467.58" y2="330" stroke="#0000ee" stroke-width="2.0" stroke-linecap="round"/>
<line x1="1421.11" y1="253.43" x2="1365.02" y2="330" stroke="#0000ee" stroke-width="2.0" stroke-linecap="round"/>
<line x1="467.58" y1="247.82" x2="523.67" y2="330" stroke="#0000ee" stroke-width="2.0" stroke-linecap="round"/>
<line x1="1365.02" y1="247.82" x2="1308.93" y2="330" stroke="#0000ee" stroke-width="2.0" stroke-linecap="round"/>
<line x1="523.67" y1="242.21" x2="579.76" y2="330" stroke="#0000ee" stroke-width="2.0" stroke-linecap="round"/>
<line x1="1308.93" y1="242.21" x2="1252.84" y2="330" stroke="#0000ee" stroke-width="2.0" stroke-linecap="round"/>
<line x1="579.76" y1="236.6" x2="635.85" y2="330" stroke="#0000ee" stroke-width="2.0" stroke-linecap="round"/>
<line x1="1252.84" y1="236.6" x2="1196.75" y2="330" stroke="#0000ee" stroke-width="2.0" stroke-linecap="round"/>
<line x1="635.85" y1="230.99" x2="691.94" y2="330" stroke="#0000ee" stroke-width="2.0" stroke-linecap="round"/>
<line x1="1196.75" y1="230.99" x2="1140.66" y2="330" stroke="#0000ee" stroke-width="2.0" stroke-linecap="round"/>
<line x1="691.94" y1="225.38" x2="748.03" y2="330" stroke="#0000ee" stroke-width="2.0" stroke-linecap="round"/>
<line x1="1140.66" y1="225.38" x2="1084.57" y2="330" stroke="#0000ee" stroke-width="2.0" stroke-linecap="round"/>
<line x1="748.03" y1="219.77" x2="804.12" y2="330" stroke="#0000ee" stroke-width="2.0" stroke-linecap="round"/>
<line x1="1084.57" y1="219.77" x2="1028.48" y2="330" stroke="#0000ee" stroke-width="2.0" stroke-linecap="round"/>
<line x1="804.12" y1="214.17" x2="860.21" y2="330" stroke="#0000ee" stroke-width="2.0" stroke-linecap="round"/>
<line x1="1028.48" y1="214.17" x2="972.39" y2="330" stroke="#0000ee" stroke-width="2.0" stroke-linecap="round"/>
<line x1="860.21" y1="208.56" x2="916.3" y2="330" stroke="#0000ee" stroke-width="2.0" stroke-linecap="round"/>
<line x1="972.39" y1="208.56" x2="916.3" y2="330" stroke="#0000ee" stroke-width="2.0" stroke-linecap="round"/>
<line x1="87.7" y1="330" x2="43.51" y2="374.19" stroke="#0000ee" stroke-width="2.0" stroke-linecap="round"/>
<line x1="87.7" y1="374.19" x2="43.51" y2="418.38" stroke="#0000ee" stroke-width="2.0" stroke-linecap="round"/>
<line x1="87.7" y1="418.38" x2="43.51" y2="462.58" stroke="#0000ee" stroke-width="2.0" stroke-linecap="round"/>
<line x1="87.7" y1="462.58" x2="43.51" y2="506.77" stroke="#0000ee" stroke-width="2.0" stroke-linecap="round"/>
<line x1="87.7" y1="506.77" x2="43.51" y2="550.96" stroke="#0000ee" stroke-width="2.0" stroke-linecap="round"/>
<line x1="87.7" y1="550.96" x2="43.51" y2="595.15" stroke="#0000ee" stroke-width="2.0" stroke-linecap="round"/>
<line x1="87.7" y1="595.15" x2="43.51" y2="639.34" stroke="#0000ee" stroke-width="2.0" stroke-linecap="round"/>
<line x1="87.7" y1="639.34" x2="43.51" y2="683.54" stroke="#0000ee" stroke-width="2.0" stroke-linecap="round"/>
<line x1="87.7" y1="683.54" x2="43.51" y2="727.73" stroke="#0000ee" stroke-width="2.0" stroke-linecap="round"/>
<line x1="87.7" y1="727.73" x2="43.51" y2="771.92" stroke="#0000ee" stroke-width="2.0" stroke-linecap="round"/>
<line x1="87.7" y1="771.92" x2="43.51" y2="816.11" stroke="#0000ee" stroke-width="2.0" stroke-linecap="round"/>
<line x1="87.7" y1="816.11" x2="43.51" y2="860.3" stroke="#0000ee" stroke-width="2.0" stroke-linecap="round"/>
<line x1="1744.9" y1="330" x2="1789.09" y2="374.19" stroke="#0000ee" stroke-width="2.0" stroke-linecap="round"/>
<line x1="1744.9" y1="374.19" x2="1789.09" y2="418.38" stroke="#0000ee" stroke-width="2.0" stroke-linecap="round"/>
<line x1="1744.9" y1="418.38" x2="1789.09" y2="462.58" stroke="#0000ee" stroke-width="2.0" stroke-linecap="round"/>
<line x1="1744.9" y1="462.58" x2="1789.09" y2="506.77" stroke="#0000ee" stroke-width="2.0" stroke-linecap="round"/>
<line x1="1744.9" y1="506.77" x2="1789.09" y2="550.96" stroke="#0000ee" stroke-width="2.0" stroke-linecap="round"/>
<line x1="1744.9" y1="550.96" x2="1789.09" y2="595.15" stroke="#0000ee" stroke-width="2.0" stroke-linecap="round"/>
<line x1="1744.9" y1="595.15" x2="1789.09" y2="639.34" stroke="#0000ee" stroke-width="2.0" stroke-linecap="round"/>
<line x1="1744.9" y1="639.34" x2="1789.09" y2="683.54" stroke="#0000ee" stroke-width="2.0" stroke-linecap="round"/>
<line x1="1744.9" y1="683.54" x2="1789.09" y2="727.73" stroke="#0000ee" stroke-width="2.0" stroke-linecap="round"/>
<line x1="1744.9" y1="727.73" x2="1789.09" y2="771.92" stroke="#0000ee" stroke-width="2.0" stroke-linecap="round"/>
<line x1="1744.9" y1="771.92" x2="1789.09" y2="816.11" stroke="#0000ee" stroke-width="2.0" stroke-linecap="round"/>
<line x1="1744.9" y1="816.11" x2="1789.09" y2="860.3" stroke="#0000ee" stroke-width="2.0" stroke-linecap="round"/>
<polyline transform="translate(87.7 285.81) rotate(-5.71)" points="-0.5,-17.7 -0.5,-21.1 5.6,-21.1 5.6,-0.7 -0.5,-0.7 -0.5,-2.8" fill="none" stroke="#0a8a1a" stroke-width="2.1" stroke-linejoin="miter"/>
<polyline transform="translate(1744.9 285.81) rotate(5.71)" points="0.5,-17.7 0.5,-21.1 -5.6,-21.1 -5.6,-0.7 0.5,-0.7 0.5,-2.8" fill="none" stroke="#0a8a1a" stroke-width="2.1" stroke-linejoin="miter"/>
<polyline transform="translate(137.42 280.84) rotate(-5.71)" points="-0.5,-17.7 -0.5,-21.1 5.6,-21.1 5.6,-0.7 -0.5,-0.7 -0.5,-2.8" fill="none" stroke="#0a8a1a" stroke-width="2.1" stroke-linejoin="miter"/>
<polyline transform="translate(1695.18 280.84) rotate(5.71)" points="0.5,-17.7 0.5,-21.1 -5.6,-21.1 -5.6,-0.7 0.5,-0.7 0.5,-2.8" fill="none" stroke="#0a8a1a" stroke-width="2.1" stroke-linejoin="miter"/>
<polyline transform="translate(243.22 270.26) rotate(-5.71)" points="-0.5,-17.7 -0.5,-21.1 5.6,-21.1 5.6,-0.7 -0.5,-0.7 -0.5,-2.8" fill="none" stroke="#0a8a1a" stroke-width="2.1" stroke-linejoin="miter"/>
<polyline transform="translate(1589.38 270.26) rotate(5.71)" points="0.5,-17.7 0.5,-21.1 -5.6,-21.1 -5.6,-0.7 0.5,-0.7 0.5,-2.8" fill="none" stroke="#0a8a1a" stroke-width="2.1" stroke-linejoin="miter"/>
<polyline transform="translate(355.4 259.04) rotate(-5.71)" points="-0.5,-17.7 -0.5,-21.1 5.6,-21.1 5.6,-0.7 -0.5,-0.7 -0.5,-2.8" fill="none" stroke="#0a8a1a" stroke-width="2.1" stroke-linejoin="miter"/>
<polyline transform="translate(1477.2 259.04) rotate(5.71)" points="0.5,-17.7 0.5,-21.1 -5.6,-21.1 -5.6,-0.7 0.5,-0.7 0.5,-2.8" fill="none" stroke="#0a8a1a" stroke-width="2.1" stroke-linejoin="miter"/>
<polyline transform="translate(467.58 247.82) rotate(-5.71)" points="-0.5,-17.7 -0.5,-21.1 5.6,-21.1 5.6,-0.7 -0.5,-0.7 -0.5,-2.8" fill="none" stroke="#0a8a1a" stroke-width="2.1" stroke-linejoin="miter"/>
<polyline transform="translate(1365.02 247.82) rotate(5.71)" points="0.5,-17.7 0.5,-21.1 -5.6,-21.1 -5.6,-0.7 0.5,-0.7 0.5,-2.8" fill="none" stroke="#0a8a1a" stroke-width="2.1" stroke-linejoin="miter"/>
<polyline transform="translate(579.76 236.6) rotate(-5.71)" points="-0.5,-17.7 -0.5,-21.1 5.6,-21.1 5.6,-0.7 -0.5,-0.7 -0.5,-2.8" fill="none" stroke="#0a8a1a" stroke-width="2.1" stroke-linejoin="miter"/>
<polyline transform="translate(1252.84 236.6) rotate(5.71)" points="0.5,-17.7 0.5,-21.1 -5.6,-21.1 -5.6,-0.7 0.5,-0.7 0.5,-2.8" fill="none" stroke="#0a8a1a" stroke-width="2.1" stroke-linejoin="miter"/>
<polyline transform="translate(691.94 225.38) rotate(-5.71)" points="-0.5,-17.7 -0.5,-21.1 5.6,-21.1 5.6,-0.7 -0.5,-0.7 -0.5,-2.8" fill="none" stroke="#0a8a1a" stroke-width="2.1" stroke-linejoin="miter"/>
<polyline transform="translate(1140.66 225.38) rotate(5.71)" points="0.5,-17.7 0.5,-21.1 -5.6,-21.1 -5.6,-0.7 0.5,-0.7 0.5,-2.8" fill="none" stroke="#0a8a1a" stroke-width="2.1" stroke-linejoin="miter"/>
<polyline transform="translate(804.12 214.17) rotate(-5.71)" points="-0.5,-17.7 -0.5,-21.1 5.6,-21.1 5.6,-0.7 -0.5,-0.7 -0.5,-2.8" fill="none" stroke="#0a8a1a" stroke-width="2.1" stroke-linejoin="miter"/>
<polyline transform="translate(1028.48 214.17) rotate(5.71)" points="0.5,-17.7 0.5,-21.1 -5.6,-21.1 -5.6,-0.7 0.5,-0.7 0.5,-2.8" fill="none" stroke="#0a8a1a" stroke-width="2.1" stroke-linejoin="miter"/>
<polyline transform="translate(916.3 202.95) rotate(-5.71)" points="-9.2,-17.7 -9.2,-21.1 -3.1,-21.1 -3.1,-0.7 -9.2,-0.7 -9.2,-2.8" fill="none" stroke="#0a8a1a" stroke-width="2.1" stroke-linejoin="miter"/>
<polyline transform="translate(916.3 202.95) rotate(5.71)" points="9.2,-17.7 9.2,-21.1 3.1,-21.1 3.1,-0.7 9.2,-0.7 9.2,-2.8" fill="none" stroke="#0a8a1a" stroke-width="2.1" stroke-linejoin="miter"/>
</svg>
<div id="fline"></div>
<div id="ftr">
<div class="fb" style="left:11px;top:48px;width:141px;height:30px;line-height:29.5px;">Desenhar</div>
<div class="lbl" style="left:172px;top:21px;width:80px;text-align:center;">Escala</div>
<div class="fb" style="left:172px;top:48px;width:80px;height:29.5px;line-height:28px;">110.0</div>
<div class="fb" style="left:262px;top:15px;width:25px;height:25px;line-height:26px;font-size:13px;font-weight:bold;color:#333;">+</div>
<div class="fb" style="left:262px;top:50px;width:25px;height:25px;line-height:26px;font-size:13px;font-weight:bold;color:#333;">-</div>
<div class="lbl" style="right:1567.5px;top:21px;">Banzos:</div>
<div class="lbl" style="right:1567.5px;top:56px;">Pilares:</div>
<div class="sel" style="left:353px;top:13px;">Vermelho</div>
<div class="sel" style="left:353px;top:48px;">Vermelho</div>
<div class="lbl" style="right:1366.5px;top:21px;">Diagonais:</div>
<div class="lbl" style="right:1366.5px;top:56px;">Terças:</div>
<div class="sel" style="left:554px;top:13px;">Azul</div>
<div class="sel" style="left:554px;top:48px;">Verde</div>
<div class="lbl" style="right:1161px;top:21px;">Montantes:</div>
<div class="lbl" style="right:1161px;top:56px;">Cotas:</div>
<div class="sel" style="left:759.5px;top:13px;">Preto</div>
<div class="sel" style="left:759.5px;top:48px;">Preto</div>
<div class="fb" style="left:1766px;top:48px;width:141px;height:30px;line-height:29.5px;">Próximo</div>
</div>
</body>
</html>
